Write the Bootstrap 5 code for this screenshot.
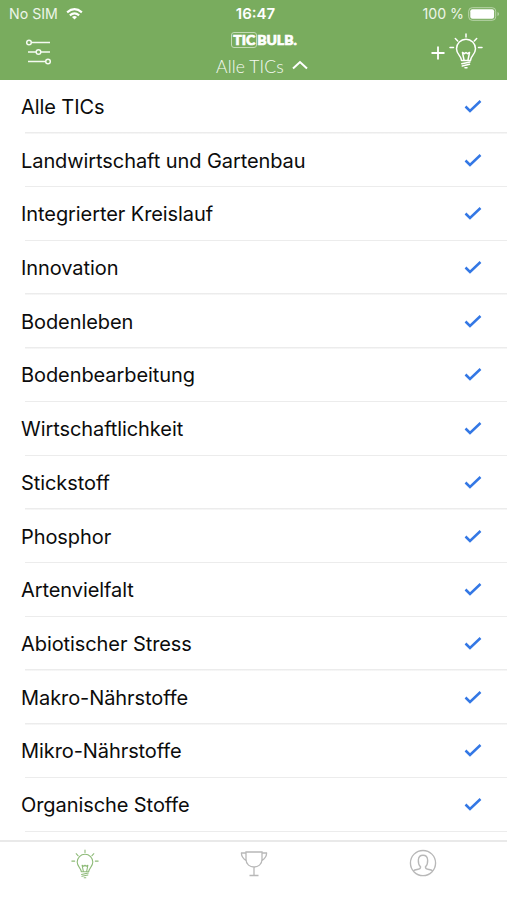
<!DOCTYPE html>
<html lang="de">
<head>
<meta charset="utf-8">
<meta name="viewport" content="width=device-width, initial-scale=1">
<title>TIC BULB</title>
<link href="https://cdn.jsdelivr.net/npm/bootstrap@5.3.0/dist/css/bootstrap.min.css" rel="stylesheet">
<style>
body{font-family:Inter,"Liberation Sans",sans-serif;background:#fff;color:#161616;height:900px}
svg{display:block;flex:none}
.top-area{background:#79ac5e;color:#fff;height:80px}
.status-line{height:28px;font-size:14.2px;line-height:28px;padding:0 7px 0 9px}
.status-line>*{flex:1 1 0}
.soft{color:#edf5e8}
.clock{font-weight:600;font-size:15px;padding-left:2px}
.title-line{height:52px}
.title-line>*{flex:1 1 0}
.brand{font:900 14px/16px Lato,sans-serif;-webkit-text-stroke:.7px #fff;padding-top:4px;padding-left:21px}
.brand-box{border:1px solid #c3dab5;border-radius:3px;padding:0 1px;line-height:13px}
.filter-label{font:300 17.500px/20px Lato,sans-serif;letter-spacing:.15px;color:#f6faf3;margin-top:9px;padding-left:17px}
.filter-label svg{margin-top:-5px}
.tic-list{height:760px;overflow:hidden}
.tic-row{height:53.73px;font-size:20px;letter-spacing:-.08px;color:#0c0c0c;padding:0 25px 0 21px;border:0;background:linear-gradient(#ececec,#ececec) 25px 100%/100% 1.5px no-repeat}
.tab-line{height:60px;border-top:2px solid #e9e9e9}
.tab-line svg{margin-top:7px}
</style>
<script src="https://cdn.jsdelivr.net/npm/bootstrap@5.3.0/dist/js/bootstrap.bundle.min.js"></script>
</head>
<body class="d-flex flex-column overflow-hidden">
<svg width="0" height="0" class="position-absolute" aria-hidden="true">
<symbol id="bulb" viewBox="0 0 34 36"><g fill="none" stroke="currentColor" stroke-linecap="round" stroke-linejoin="round">
<path d="M12.5 27.5C12.5 23 7.5 21.5 7.5 15.7a9.5 9.5 0 0 1 19 0C26.500 21.500 21.500 23 21.500 27.500Z"/>
<path d="M15 27L13.500 19.500L15.500 20.700L17 19.500L18.500 20.700L20.500 19.500L19 27M12.800 30.700L21 29M13.300 33L20.500 31.300M16 34.700H18"/>
<path d="M17 1V4M6.300 5.500L8.700 8M27.700 5.500L25.300 8M1 14.500H4.500M29.500 14.500H33"/></g></symbol>
</svg>
<header class="top-area">
<div class="status-line d-flex">
<div class="d-flex align-items-center soft"><span id="sim">No SIM</span>
<svg class="ms-2" width="17" height="12" viewBox="0 0 18 13" fill="none" stroke="#fff" stroke-width="2.300"><path d="M1 4.700Q9-2.200 17 4.700M4 8Q9 3.700 14 8"/><path d="M9 12.500L6.300 9.800Q9 7.800 11.700 9.800Z" fill="#fff" stroke="none"/></svg></div>
<div class="text-center clock"><span>16:47</span></div>
<div class="d-flex justify-content-end align-items-center soft"><span>100 %</span>
<svg class="ms-1" width="32" height="14" viewBox="0 0 32 14"><rect x=".7" y=".7" width="27" height="12.600" rx="3.500" fill="none" stroke="#b9d5aa"/><rect x="2.300" y="2.300" width="23.800" height="9.400" rx="2" fill="#fff"/><path d="M29.500 5V9Q31 8.400 31 7T29.500 5" fill="#b9d5aa"/></svg></div>
</div>
<div class="title-line d-flex">
<div class="ps-4"><svg class="mt-2 ms-0" width="30" height="32" viewBox="0 0 30 32" fill="none" stroke="#f5faf2" stroke-width="1.500"><path d="M7.500 6.500H26M4 16H12M17 16H26M4 25.500H21.500"/><circle cx="5" cy="6.500" r="2.300"/><circle cx="14.500" cy="16" r="2.300"/><circle cx="24" cy="25.500" r="2.300"/></svg></div>
<div><div class="brand d-flex justify-content-center"><span class="brand-box">TIC</span><span>BULB.</span></div>
<div class="filter-label d-flex justify-content-center align-items-center"><span>Alle TICs</span><svg class="ms-2" width="16" height="10" viewBox="0 0 16 10" fill="none" stroke="#fff" stroke-width="2"><path d="M1 8.500L8 2L15 8.500"/></svg></div></div>
<div class="d-flex justify-content-end pe-4"><svg class="me-1" style="margin-top:18px" width="14" height="14" viewBox="0 0 14 14" stroke="#fff" stroke-width="1.800"><path d="M7 .5V13.500M.5 7H13.500"/></svg><svg class="mt-1" width="34" height="38" stroke-width="1.500"><use href="#bulb" width="34" height="38"/></svg></div>
</div>
</header>
<main class="tic-list list-group list-group-flush" id="tics"></main>
<nav class="tab-line d-flex">
<div class="col-4 d-flex justify-content-center" style="color:#8dba77"><svg width="28" height="30" viewBox="0 0 28 30" stroke-width="1.300"><use href="#bulb" width="28" height="30"/></svg></div>
<div class="col-4 d-flex justify-content-center"><svg width="28" height="29" viewBox="0 0 28 29" fill="none" stroke="#b8b8b8" stroke-width="1.300"><path d="M6 3H22V10.500C22 20.500 6 20.500 6 10.500ZM6 4H1.500C1 8 4 10 6.700 12M22 4H26.500C27 8 24 10 21.300 12M14 18V26M9.500 26.500H18.500"/></svg></div>
<div class="col-4 d-flex justify-content-center"><svg width="28" height="29" viewBox="0 0 28 30" fill="none" stroke="#b8b8b8" stroke-width="1.400"><circle cx="14" cy="14.500" r="13"/><path d="M4 22.500C7 20.500 11.500 22 11.500 18.500C8.500 15.500 7.500 6.500 14 6.500S19.500 15.500 16.500 18.500C16.500 22 21 20.500 24 22.500"/></svg></div>
</nav>
<script>
const names=["Alle TICs","Landwirtschaft und Gartenbau","Integrierter Kreislauf","Innovation","Bodenleben","Bodenbearbeitung","Wirtschaftlichkeit","Stickstoff","Phosphor","Artenvielfalt","Abiotischer Stress","Makro-Nährstoffe","Mikro-Nährstoffe","Organische Stoffe"];
document.getElementById("tics").innerHTML=names.map(n=>`<div class="tic-row list-group-item d-flex flex-shrink-0 align-items-center justify-content-between"><span>${n}</span><svg width="18" height="14" viewBox="0 0 18 14" fill="none" stroke="#3478e5" stroke-width="2.500"><path d="M1.500 6.500L6 11L16.500 1"/></svg></div>`).join("");
</script>
</body>
</html>
